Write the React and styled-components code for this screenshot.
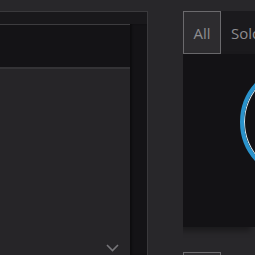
import React from "react";
import styled, { createGlobalStyle } from "styled-components";

const Global = createGlobalStyle`
  html, body { margin: 0; padding: 0; background: #28272a; overflow: hidden; }
  body { font-family: "Open Sans", "Liberation Sans", sans-serif; }
`;

const Page = styled.div`
  display: flex;
  width: 255px;
  height: 255px;
  overflow: hidden;
  background: #28272a;
`;

const LeftCol = styled.div`
  width: 148px;
  flex-shrink: 0;
  padding-top: 11px;
  display: flex;
  box-sizing: border-box;
`;

const Box = styled.div`
  flex: 1;
  display: flex;
  flex-direction: column;
  border-top: 1px solid #3a393c;
  border-right: 1px solid #3a393c;
  background: #141316;
`;

const HeaderStrip = styled.div`
  height: 12px;
  background: #19181b;
`;

const BoxBody = styled.div`
  flex: 1;
  display: flex;
  min-height: 0;
`;

const ListPanel = styled.div`
  width: 130px;
  display: flex;
  flex-direction: column;
  border-top: 1px solid #3d3c3f;
`;

const SelectedRow = styled.div`
  height: 42px;
  background: #141316;
  border-bottom: 2px solid #343336;
`;

const ListRest = styled.div`
  flex: 1;
  background: #262528;
  display: flex;
  align-items: flex-end;
  justify-content: flex-end;
  padding: 0 11px 3px 0;
`;

const Track = styled.div`
  flex: 1;
  background: #141316;
  box-shadow: inset 2px 0 2px rgba(0, 0, 0, 0.35);
`;

const Gap = styled.div`
  width: 35px;
  flex-shrink: 0;
`;

const RightCol = styled.div`
  flex: 1;
  min-width: 0;
  padding-top: 11px;
  display: flex;
  flex-direction: column;
  overflow: hidden;
`;

const Tabs = styled.div`
  display: flex;
  height: 43px;
  flex-shrink: 0;
`;

const Tab = styled.div`
  box-sizing: border-box;
  height: 43px;
  display: flex;
  align-items: center;
  font-size: 15px;
  color: #8e8d90;
  flex-shrink: 0;
  white-space: nowrap;
  ${(p) =>
    p.$active
      ? `width: 38px; justify-content: center; border: 1px solid #6b6a6d; background: #2d2c2f;`
      : `width: 70px; padding-left: 10px; background: #1b1a1d;`}
`;

const Panel = styled.div`
  height: 173px;
  flex-shrink: 0;
  background: #131215;
  box-shadow: -4px 4px 6px rgba(0, 0, 0, 0.35);
  display: flex;
  padding: 10px 0 0 57px;
  box-sizing: border-box;
  overflow: hidden;
`;

const Ring = styled.div`
  width: 116px;
  height: 116px;
  flex-shrink: 0;
  box-sizing: border-box;
  border-radius: 50%;
  border: 4px solid #2a93cc;
  box-shadow: inset 0 0 0 1px #d6e6ee;
`;

const BottomTab = styled.div`
  margin-top: 25px;
  width: 38px;
  height: 10px;
  box-sizing: border-box;
  border: 1px solid #6b6a6d;
  border-bottom: none;
  background: #2d2c2f;
`;

const Chevron = () => (
  <svg width="13" height="8" viewBox="0 0 13 8">
    <path d="M1 1 L6.5 6.5 L12 1" fill="none" stroke="#77767a" strokeWidth="1.6" />
  </svg>
);

export default function App() {
  return (
    <>
      <Global />
      <Page>
        <LeftCol>
          <Box>
            <HeaderStrip />
            <BoxBody>
              <ListPanel>
                <SelectedRow />
                <ListRest>
                  <Chevron />
                </ListRest>
              </ListPanel>
              <Track />
            </BoxBody>
          </Box>
        </LeftCol>
        <Gap />
        <RightCol>
          <Tabs>
            <Tab $active>All</Tab>
            <Tab>Solo</Tab>
          </Tabs>
          <Panel>
            <Ring />
          </Panel>
          <BottomTab />
        </RightCol>
      </Page>
    </>
  );
}
